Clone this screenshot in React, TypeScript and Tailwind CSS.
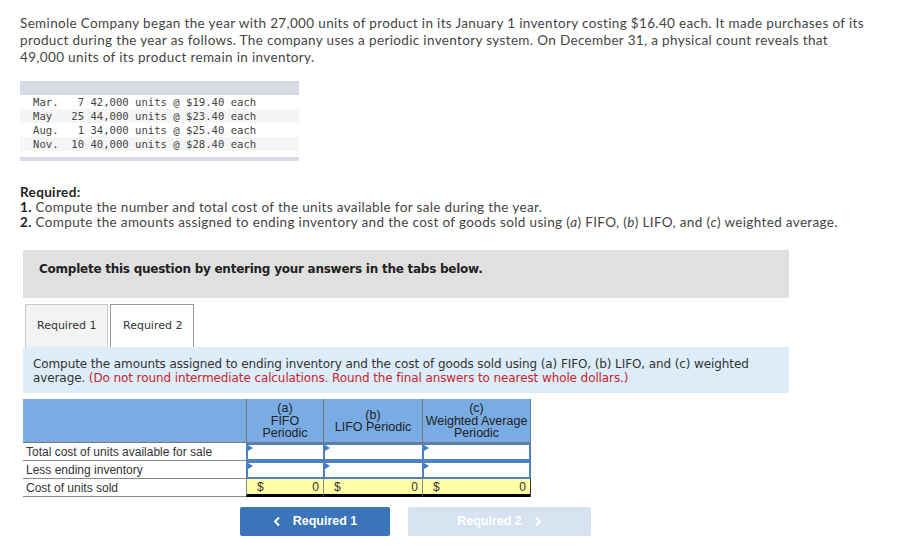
import React from 'react';

const purchases = [
  'Mar.   7 42,000 units @ $19.40 each',
  'May   25 44,000 units @ $23.40 each',
  'Aug.   1 34,000 units @ $25.40 each',
  'Nov.  10 40,000 units @ $28.40 each',
];

const rows = ['Total cost of units available for sale', 'Less ending inventory'];

function InputCell({ last }: { last?: boolean }) {
  return (
    <div className={`relative h-[18px] border-2 border-[#4f80c0] bg-white ${last ? '' : 'border-r-0'}`}>
      <div className="absolute left-0 top-0 w-0 h-0 border-y-[3px] border-y-transparent border-l-[5px] border-l-[#3b7bcc]" />
    </div>
  );
}

function TotalCell() {
  return (
    <div className="h-[18px] flex items-center justify-between px-[10px] pr-[4px] bg-[#ffffa6] border-l border-[#888] border-b-[3px] border-b-black text-[12px] text-[#333]">
      <span>$</span>
      <span>0</span>
    </div>
  );
}

export default function App() {
  return (
    <div className="w-[907px] h-[560px] bg-white overflow-hidden text-[#333]">
      <div className="pl-[20px] pt-[15px]">
        <p className="w-[850px] text-[13.5px] leading-[17px] tracking-[0.35px] text-[#444]" style={{ fontFamily: 'Lato, "Noto Sans", sans-serif' }}>
          Seminole Company began the year with 27,000 units of product in its January 1 inventory costing $16.40 each. It made purchases of its product during the year as follows. The company uses a periodic inventory system. On December 31, a physical count reveals that 49,000 units of its product remain in inventory.
        </p>

        <div className="mt-[15px] w-[279px]">
          <div className="h-[14px] bg-[#d5dae6]" />
          <div className="text-[10.6px] leading-[14px] text-[#444]" style={{ fontFamily: '"DejaVu Sans Mono", monospace' }}>
            {purchases.map((line, i) => (
              <div key={line} className={`h-[14px] pl-[13px] whitespace-pre ${i % 2 === 1 ? 'bg-[#f5f5f5]' : 'bg-white'}`}>
                {line}
              </div>
            ))}
          </div>
          <div className="mt-[6px] h-[4px] bg-[#d5dae6]" />
        </div>

        <div className="mt-[24px] text-[13.5px] leading-[15px] tracking-[0.35px] text-[#444]" style={{ fontFamily: 'Lato, "Noto Sans", sans-serif' }}>
          <div className="font-bold text-[#222]">Required:</div>
          <div><span className="font-bold text-[#222]">1.</span> Compute the number and total cost of the units available for sale during the year.</div>
          <div>
            <span className="font-bold text-[#222]">2.</span> Compute the amounts assigned to ending inventory and the cost of goods sold using (<i>a</i>) FIFO, (<i>b</i>) LIFO, and (<i>c</i>) weighted average.
          </div>
        </div>
      </div>

      <div className="ml-[23px] w-[766px]" style={{ fontFamily: '"DejaVu Sans", Verdana, sans-serif' }}>
        <div className="mt-[20px] h-[48px] bg-[#e0e0e0] pl-[16px] pt-[11px] text-[12px] leading-[16px] tracking-[-0.25px] font-bold text-[#222]">
          Complete this question by entering your answers in the tabs below.
        </div>

        <div className="mt-[6px] flex gap-[2px] pl-[2px] text-[11px] text-[#333]">
          <div className="w-[83px] h-[43px] flex items-center pl-[11px] bg-[#f3f3f3] border border-b-0 border-[#c8c8c8]">Required 1</div>
          <div className="w-[84px] h-[43px] flex items-center pl-[12px] bg-white border border-b-0 border-[#999]">Required 2</div>
        </div>

        <div className="h-[46px] bg-[#dcecf9] pl-[10px] pt-[10px] text-[12px] leading-[14px] tracking-[-0.1px] text-[#333]">
          <div>Compute the amounts assigned to ending inventory and the cost of goods sold using (a) FIFO, (b) LIFO, and (c) weighted</div>
          <div>
            average. <span className="text-[#c8262c]">(Do not round intermediate calculations. Round the final answers to nearest whole dollars.)</span>
          </div>
        </div>
      </div>

      <div className="ml-[23px] mt-[6px] w-[508px] text-[12px]" style={{ fontFamily: '"Liberation Sans", Arial, sans-serif' }}>
        <div className="grid grid-cols-[223px_77px_99px_109px] h-[44px] bg-[#79ace4] text-[#222] text-[12.5px] leading-[12.5px] text-center border-b border-[#777]">
          <div />
          <div className="flex flex-col items-center justify-center pt-[1px] border-l border-[#777]">
            <span>(a)</span>
            <span>FIFO</span>
            <span>Periodic</span>
          </div>
          <div className="flex flex-col items-center justify-center pt-[1px] border-l border-[#777]">
            <span>(b)</span>
            <span>LIFO Periodic</span>
          </div>
          <div className="flex flex-col items-center justify-center pt-[1px] border-l border-[#777] border-r border-r-[#5a7fb0]">
            <span>(c)</span>
            <span>Weighted Average</span>
            <span>Periodic</span>
          </div>
        </div>

        {rows.map((label) => (
          <div key={label} className="grid grid-cols-[223px_77px_99px_109px]">
            <div className="h-[18px] pl-[3px] flex items-center border-b border-[#888] text-[#333]">{label}</div>
            <InputCell />
            <InputCell />
            <InputCell last />
          </div>
        ))}

        <div className="grid grid-cols-[223px_77px_99px_109px]">
          <div className="h-[18px] pl-[3px] flex items-center border-b border-[#888] text-[#333]">Cost of units sold</div>
          <TotalCell />
          <TotalCell />
          <div className="border-r border-[#333]">
            <TotalCell />
          </div>
        </div>
      </div>

      <div className="mt-[10px] pl-[240px] flex gap-[18px] text-[12.5px] font-bold text-white" style={{ fontFamily: '"Liberation Sans", Arial, sans-serif' }}>
        <button className="w-[150px] h-[29px] rounded-[2px] bg-[#3a74b9] flex items-center justify-center gap-[12px]">
          <svg width="8" height="11" viewBox="0 0 8 11" fill="none" stroke="white" strokeWidth="2"><path d="M6 1.5 2 5.5 6 9.5" /></svg>
          <span>Required 1</span>
        </button>
        <button className="w-[183px] h-[29px] rounded-[2px] bg-[#d6e2f0] flex items-center justify-center gap-[12px]">
          <span>Required 2</span>
          <svg width="8" height="11" viewBox="0 0 8 11" fill="none" stroke="white" strokeWidth="2"><path d="M2 1.5 6 5.5 2 9.5" /></svg>
        </button>
      </div>
    </div>
  );
}
